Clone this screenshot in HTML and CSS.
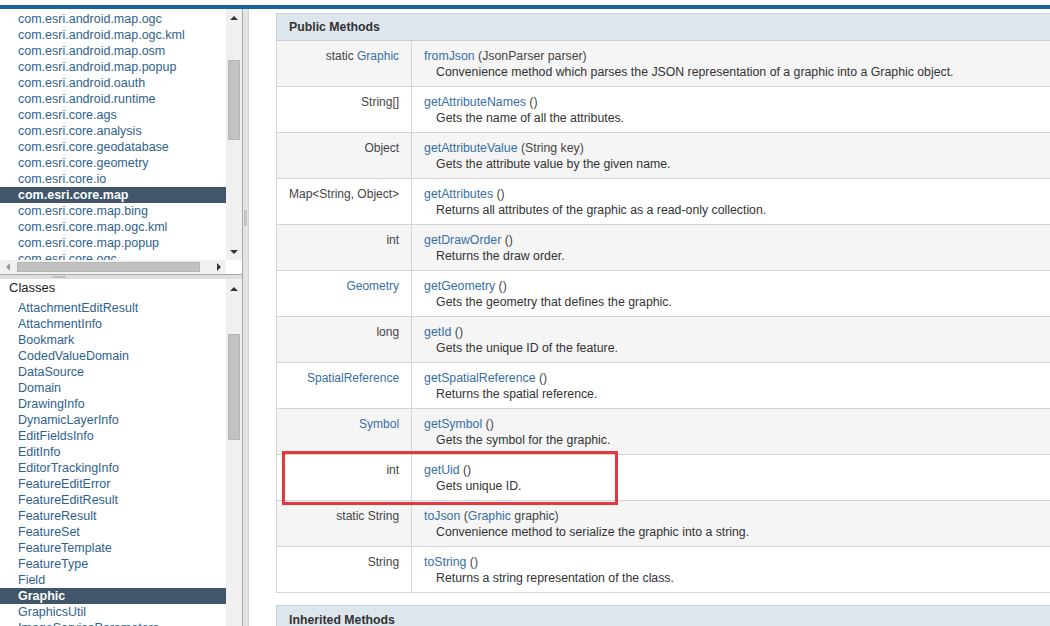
FILE: index.html
```html
<!DOCTYPE html>
<html>
<head>
<meta charset="utf-8">
<link rel="stylesheet" href="styles.css">
</head>
<body>
<div class="topline"></div>
<div class="main">
  <div class="left">
    <div class="pane pkg">
      <div class="list pkglist">
        <a class="item">com.esri.android.map.ogc</a>
        <a class="item">com.esri.android.map.ogc.kml</a>
        <a class="item">com.esri.android.map.osm</a>
        <a class="item">com.esri.android.map.popup</a>
        <a class="item">com.esri.android.oauth</a>
        <a class="item">com.esri.android.runtime</a>
        <a class="item">com.esri.core.ags</a>
        <a class="item">com.esri.core.analysis</a>
        <a class="item">com.esri.core.geodatabase</a>
        <a class="item">com.esri.core.geometry</a>
        <a class="item">com.esri.core.io</a>
        <a class="item selected">com.esri.core.map</a>
        <a class="item">com.esri.core.map.bing</a>
        <a class="item">com.esri.core.map.ogc.kml</a>
        <a class="item">com.esri.core.map.popup</a>
        <a class="item">com.esri.core.ogc</a>
      </div>
      <div class="vscroll">
        <div class="btn"><span class="arrow up"></span></div>
        <div class="thumb pkgthumb"></div>
        <div class="fill"></div>
        <div class="btn"><span class="arrow down"></span></div>
      </div>
      <div class="hscroll">
        <div class="hbtn"><span class="arrow leftarr"></span></div>
        <div class="hthumb"></div>
        <div class="hfill"></div>
        <div class="hbtn"><span class="arrow rightarr"></span></div>
      </div>
      <div class="corner"></div>
    </div>
    <div class="hsplit"><span class="hgrip"></span></div>
    <div class="pane classes">
      <div class="list classlist">
        <div class="heading">Classes</div>
        <a class="item">AttachmentEditResult</a>
        <a class="item">AttachmentInfo</a>
        <a class="item">Bookmark</a>
        <a class="item">CodedValueDomain</a>
        <a class="item">DataSource</a>
        <a class="item">Domain</a>
        <a class="item">DrawingInfo</a>
        <a class="item">DynamicLayerInfo</a>
        <a class="item">EditFieldsInfo</a>
        <a class="item">EditInfo</a>
        <a class="item">EditorTrackingInfo</a>
        <a class="item">FeatureEditError</a>
        <a class="item">FeatureEditResult</a>
        <a class="item">FeatureResult</a>
        <a class="item">FeatureSet</a>
        <a class="item">FeatureTemplate</a>
        <a class="item">FeatureType</a>
        <a class="item">Field</a>
        <a class="item selected">Graphic</a>
        <a class="item">GraphicsUtil</a>
        <a class="item">ImageServiceParameters</a>
      </div>
      <div class="vscroll">
        <div class="btn cbtn"><span class="arrow up"></span></div>
        <div class="thumb classthumb"></div>
        <div class="fill"></div>
      </div>
    </div>
  </div>
  <div class="vsplit"><span class="vgrip"></span></div>
  <div class="right">
    <table class="methods">
      <tr class="head"><th colspan="2">Public Methods</th></tr>
      <tr class="odd">
        <td class="type">static <a>Graphic</a></td>
        <td class="sig"><div class="name"><a>fromJson</a> (JsonParser parser)</div><div class="desc">Convenience method which parses the JSON representation of a graphic into a Graphic object.</div></td>
      </tr>
      <tr>
        <td class="type">String[]</td>
        <td class="sig"><div class="name"><a>getAttributeNames</a> ()</div><div class="desc">Gets the name of all the attributes.</div></td>
      </tr>
      <tr class="odd">
        <td class="type">Object</td>
        <td class="sig"><div class="name"><a>getAttributeValue</a> (String key)</div><div class="desc">Gets the attribute value by the given name.</div></td>
      </tr>
      <tr>
        <td class="type">Map&lt;String, Object&gt;</td>
        <td class="sig"><div class="name"><a>getAttributes</a> ()</div><div class="desc">Returns all attributes of the graphic as a read-only collection.</div></td>
      </tr>
      <tr class="odd">
        <td class="type">int</td>
        <td class="sig"><div class="name"><a>getDrawOrder</a> ()</div><div class="desc">Returns the draw order.</div></td>
      </tr>
      <tr>
        <td class="type"><a>Geometry</a></td>
        <td class="sig"><div class="name"><a>getGeometry</a> ()</div><div class="desc">Gets the geometry that defines the graphic.</div></td>
      </tr>
      <tr class="odd">
        <td class="type">long</td>
        <td class="sig"><div class="name"><a>getId</a> ()</div><div class="desc">Gets the unique ID of the feature.</div></td>
      </tr>
      <tr>
        <td class="type"><a>SpatialReference</a></td>
        <td class="sig"><div class="name"><a>getSpatialReference</a> ()</div><div class="desc">Returns the spatial reference.</div></td>
      </tr>
      <tr class="odd">
        <td class="type"><a>Symbol</a></td>
        <td class="sig"><div class="name"><a>getSymbol</a> ()</div><div class="desc">Gets the symbol for the graphic.</div></td>
      </tr>
      <tr>
        <td class="type">int</td>
        <td class="sig"><div class="name"><a>getUid</a> ()</div><div class="desc">Gets unique ID.</div></td>
      </tr>
      <tr class="odd">
        <td class="type">static String</td>
        <td class="sig"><div class="name"><a>toJson</a> (<a>Graphic</a> graphic)</div><div class="desc">Convenience method to serialize the graphic into a string.</div></td>
      </tr>
      <tr>
        <td class="type">String</td>
        <td class="sig"><div class="name"><a>toString</a> ()</div><div class="desc">Returns a string representation of the class.</div></td>
      </tr>
    </table>
    <table class="methods inherited">
      <tr class="head"><th>Inherited Methods</th></tr>
    </table>
    <div class="highlight"></div>
  </div>
</div>
</body>
</html>
```
FILE: styles.css
```css
html, body {
  margin: 0;
  padding: 0;
  background: #ffffff;
  font-family: "Liberation Sans", Arial, sans-serif;
  font-size: 12px;
  color: #333333;
  overflow: hidden;
  height: 626px;
}

.topline {
  margin-top: 5px;
  height: 4px;
  background: #17639a;
}

.main {
  display: flex;
  height: 617px;
}

.left {
  width: 242px;
  display: flex;
  flex-direction: column;
  flex: none;
}

.pane {
  display: grid;
  grid-template-columns: 226px 16px;
  overflow: hidden;
}

.pkg {
  height: 265px;
  grid-template-rows: 251px 14px;
}

.classes {
  flex: 1;
  grid-template-rows: 1fr;
}

.list {
  overflow: hidden;
  display: flex;
  flex-direction: column;
}

.pkglist {
  padding-top: 2px;
}

.item {
  display: block;
  flex: none;
  height: 16px;
  line-height: 16px;
  padding-left: 18px;
  color: #2f5f8f;
  font-size: 12.5px;
  white-space: nowrap;
}

.item.selected {
  background: #41566b;
  color: #ffffff;
  font-weight: bold;
}

.heading {
  flex: none;
  height: 21px;
  line-height: 18px;
  padding-left: 9px;
  font-size: 13px;
  color: #222222;
}

.vscroll {
  background: #f0f0f0;
  display: flex;
  flex-direction: column;
  overflow: hidden;
}

.btn {
  height: 17px;
  flex: none;
  display: flex;
  align-items: center;
  justify-content: center;
}

.cbtn {
  height: 19px;
}

.thumb {
  flex: none;
  margin: 0 2px 0 2px;
  background: #c2c2c2;
  border: 1px solid #b4b4b4;
}

.pkgthumb {
  margin-top: 34px;
  height: 78px;
}

.classthumb {
  margin-top: 36px;
  height: 104px;
}

.fill {
  flex: 1;
}

.hscroll {
  background: #f0f0f0;
  display: flex;
  align-items: center;
}

.hbtn {
  width: 15px;
  height: 14px;
  flex: none;
  display: flex;
  align-items: center;
  justify-content: center;
}

.hthumb {
  flex: none;
  width: 181px;
  height: 8px;
  margin-left: 2px;
  background: #c2c2c2;
  border: 1px solid #b4b4b4;
}

.hfill {
  flex: 1;
}

.corner {
  background: #ffffff;
}

.arrow {
  display: block;
  width: 0;
  height: 0;
}

.arrow.up {
  border-left: 4px solid transparent;
  border-right: 4px solid transparent;
  border-bottom: 4px solid #333333;
}

.arrow.down {
  border-left: 4px solid transparent;
  border-right: 4px solid transparent;
  border-top: 4px solid #333333;
}

.arrow.leftarr {
  border-top: 4px solid transparent;
  border-bottom: 4px solid transparent;
  border-right: 4px solid #9a9a9a;
}

.arrow.rightarr {
  border-top: 4px solid transparent;
  border-bottom: 4px solid transparent;
  border-left: 4px solid #333333;
}

.hsplit {
  flex: none;
  height: 4px;
  border-top: 1px solid #a8a8a8;
  background: #dedede;
  display: flex;
  justify-content: center;
}

.hgrip {
  margin-top: 1px;
  width: 14px;
  height: 2px;
  margin-left: -124px;
  background-image: radial-gradient(circle, #a0a0a0 0.6px, transparent 0.8px);
  background-size: 2px 2px;
}

.vsplit {
  flex: none;
  width: 5px;
  border-left: 1px solid #a8a8a8;
  border-right: 1px solid #d0d0d0;
  background: #e4e4e4;
  display: flex;
  align-items: center;
}

.vgrip {
  display: block;
  width: 3px;
  height: 16px;
  margin-left: 1px;
  margin-top: -200px;
  background-image: radial-gradient(circle, #a0a0a0 0.6px, transparent 0.8px);
  background-size: 2px 2px;
}

.right {
  flex: 1;
  position: relative;
  overflow: hidden;
  padding: 4px 0 0 27px;
}

.methods {
  border-collapse: collapse;
  width: 800px;
  font-size: 12.3px;
}

.methods th {
  background: #dde5ed;
  border: 1px solid #c8d0d8;
  height: 26px;
  text-align: left;
  padding: 0 12px;
  font-weight: bold;
  color: #333333;
}

.methods td {
  border: 1px solid #d4d4d4;
  vertical-align: top;
  padding: 7px 12px 5px 12px;
  height: 33px;
}

.methods tr.odd td {
  background: #f5f5f5;
}

.methods td.type {
  width: 110px;
  text-align: right;
  color: #444444;
  line-height: 16px;
  white-space: nowrap;
  font-size: 12px;
}

.methods td.sig {
  color: #444444;
}

.methods a {
  color: #3570a6;
}

.name {
  line-height: 16px;
  white-space: nowrap;
}

.desc {
  line-height: 17px;
  padding-left: 12px;
  color: #333333;
  white-space: nowrap;
}

.inherited {
  margin-top: 12px;
}

.inherited th {
  height: 28px;
  border-bottom: none;
}

.highlight {
  position: absolute;
  left: 33px;
  top: 442px;
  width: 330px;
  height: 48px;
  border: 3px solid #e2393e;
}
```
